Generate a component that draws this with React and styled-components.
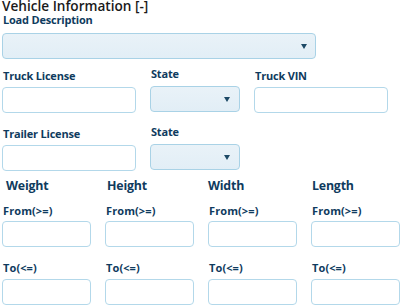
import React from "react";
import styled, { createGlobalStyle } from "styled-components";

const Global = createGlobalStyle`
  html, body { margin: 0; padding: 0; background: #fff; }
  body { font-family: "Open Sans", "Noto Sans", sans-serif; }
  * { box-sizing: border-box; }
`;

const Page = styled.div`
  width: 401px;
  height: 305px;
  overflow: hidden;
  padding: 0 0 0 2px;
  display: flex;
  flex-direction: column;
`;

const Title = styled.div`
  font-size: 13.6px;
  line-height: 12px;
  height: 12px;
  color: #1a1a1a;
  font-weight: 600;
  white-space: nowrap;
`;

const Label = styled.div`
  font-size: 11px;
  font-weight: 700;
  line-height: 12px;
  height: 12px;
  color: #0f3b5e;
  padding-left: ${p => p.$indent ?? 1}px;
  margin-top: ${p => p.$top || 0}px;
  margin-bottom: ${p => p.$bottom || 0}px;
  white-space: nowrap;
  letter-spacing: ${p => p.$ls ?? -0.2}px;
`;

const Header = styled(Label)`
  font-size: 12.4px;
  line-height: 13px;
  height: 13px;
`;

const Input = styled.div`
  width: ${p => p.$w}px;
  height: 26px;
  border: 1px solid #b3d8ea;
  border-radius: 4px;
  background: #fff;
`;

const Select = styled.div`
  width: ${p => p.$w}px;
  height: 26px;
  border: 1px solid #a9d2e6;
  border-radius: 4px;
  background: linear-gradient(#e9f2f8, #e2eef6);
  display: flex;
  align-items: center;
  justify-content: flex-end;
  padding-right: ${p => p.$pr || 8}px;
`;

const Arrow = styled.span`
  width: 0;
  height: 0;
  border-left: 3px solid transparent;
  border-right: 3px solid transparent;
  border-top: 5px solid #1d4966;
`;

const Row = styled.div`
  display: flex;
  gap: ${p => p.$gap || 14}px;
  margin-top: ${p => p.$top || 0}px;
`;

const Field = styled.div`
  display: flex;
  flex-direction: column;
  width: ${p => p.$w}px;
`;

const Dims = [
  ["Weight", 4],
  ["Height", 2],
  ["Width", 0],
  ["Length", 1],
];

export default function App() {
  return (
    <Page>
      <Global />
      <Title>Vehicle Information [-]</Title>
      <Label $top={2} $bottom={7}>Load Description</Label>
      <Select $w={314} $pr={8}><Arrow /></Select>
      <Row $top={9} $gap={14}>
        <Field $w={134}>
          <Label $top={2} $bottom={5}>Truck License</Label>
          <Input $w={134} />
        </Field>
        <Field $w={90}>
          <Label $top={0} $bottom={6}>State</Label>
          <Select $w={90} $pr={9}><Arrow /></Select>
        </Field>
        <Field $w={134}>
          <Label $top={2} $bottom={5}>Truck VIN</Label>
          <Input $w={134} />
        </Field>
      </Row>
      <Row $top={13} $gap={14}>
        <Field $w={134}>
          <Label $top={2} $bottom={5}>Trailer License</Label>
          <Input $w={134} />
        </Field>
        <Field $w={90}>
          <Label $top={0} $bottom={6}>State</Label>
          <Select $w={90} $pr={9}><Arrow /></Select>
        </Field>
      </Row>
      <Row $top={8} $gap={14}>
        {Dims.map(([d, indent]) => (
          <Field $w={89} key={d}>
            <Header $indent={indent} $bottom={13}>{d}</Header>
            <Label $bottom={4} $ls={0.1}>From(&gt;=)</Label>
            <Input $w={89} />
            <Label $top={15} $bottom={5} $ls={0.1}>To(&lt;=)</Label>
            <Input $w={89} />
          </Field>
        ))}
      </Row>
    </Page>
  );
}
